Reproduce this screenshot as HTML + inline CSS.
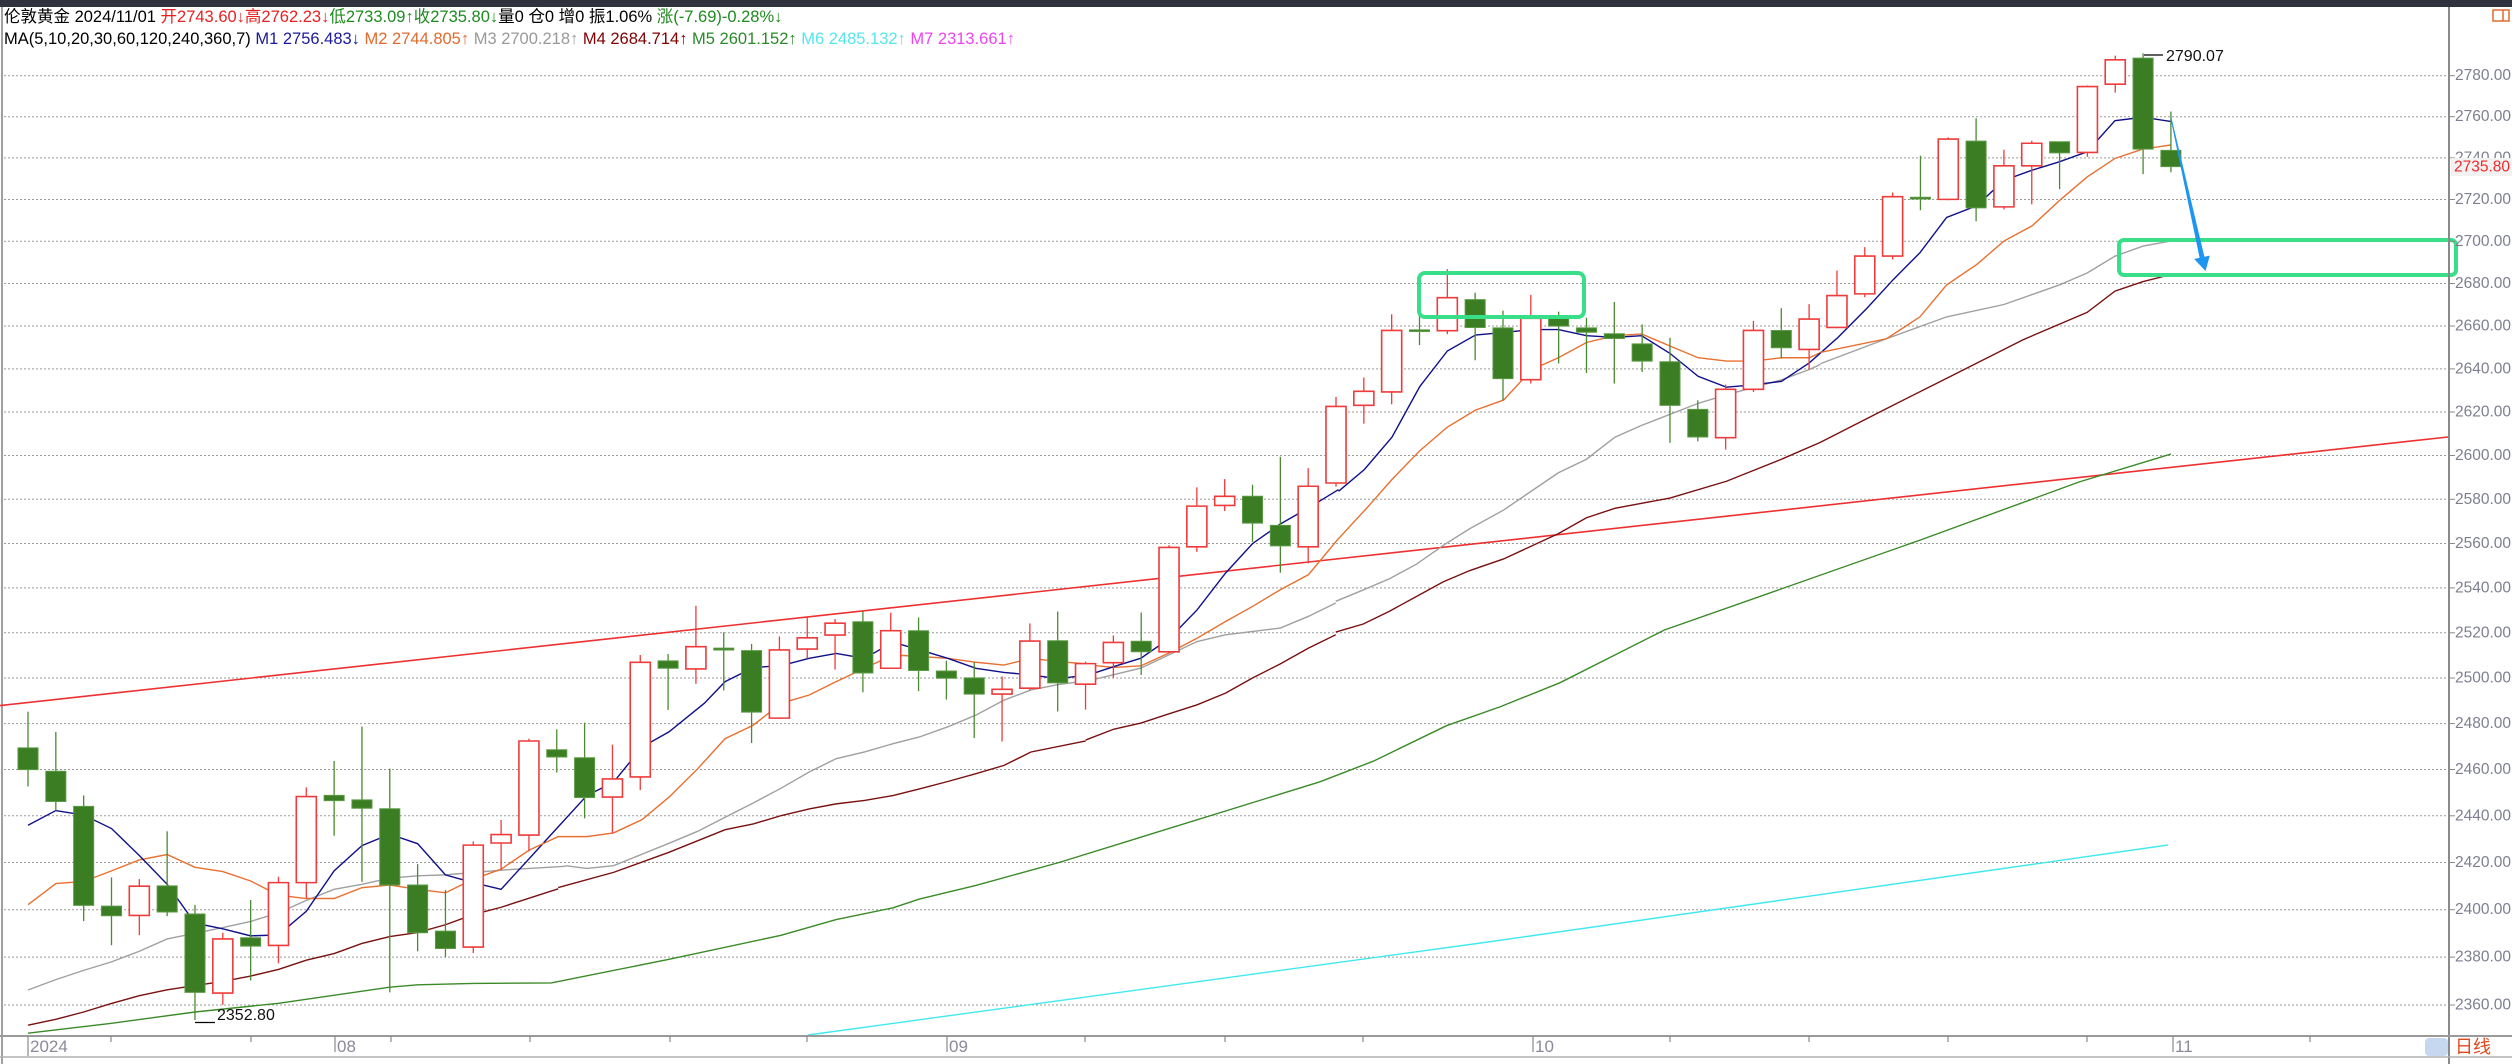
<!DOCTYPE html>
<html><head><meta charset="utf-8"><style>
html,body{margin:0;padding:0;background:#fff;overflow:hidden}
svg{display:block}
.c *{vector-effect:non-scaling-stroke}
.g line{stroke:#4a8a30;stroke-width:1.3}
.g rect{fill:#3a7d22;stroke:#5c9a45;stroke-width:1}
.r line{stroke:#ee3b3b;stroke-width:1.3}
.r rect{fill:#fff;stroke:#ee3b3b;stroke-width:1.6}
.ma{fill:none;stroke-width:1.4}
.m1{stroke:#10108a}.m2{stroke:#e87030}.m3{stroke:#a0a0a0}.m4{stroke:#7a1010}
.t{font-family:"Liberation Sans","Noto Sans CJK SC",sans-serif}
.yl{font-family:"Liberation Sans",sans-serif;font-size:15.5px;fill:#7d7f90}
</style></head><body>
<svg width="2512" height="1064" viewBox="0 0 2512 1064" xmlns="http://www.w3.org/2000/svg">
<rect x="0" y="0" width="2512" height="1064" fill="#fff"/>
<rect x="0" y="0" width="2512" height="7" fill="#30333d"/>
<line x1="2" y1="7" x2="2" y2="1064" stroke="#a0a0a0" stroke-width="2"/>

<g stroke="#9a9a9a" stroke-width="1" stroke-dasharray="2 2">
<line x1="4" y1="75.7" x2="2448" y2="75.7"/><line x1="4" y1="116.7" x2="2448" y2="116.7"/><line x1="4" y1="157.9" x2="2448" y2="157.9"/><line x1="4" y1="199.5" x2="2448" y2="199.5"/><line x1="4" y1="241.3" x2="2448" y2="241.3"/><line x1="4" y1="283.5" x2="2448" y2="283.5"/><line x1="4" y1="326" x2="2448" y2="326"/><line x1="4" y1="368.9" x2="2448" y2="368.9"/><line x1="4" y1="412" x2="2448" y2="412"/><line x1="4" y1="455.5" x2="2448" y2="455.5"/><line x1="4" y1="499.3" x2="2448" y2="499.3"/><line x1="4" y1="543.5" x2="2448" y2="543.5"/><line x1="4" y1="587.9" x2="2448" y2="587.9"/><line x1="4" y1="632.8" x2="2448" y2="632.8"/><line x1="4" y1="678" x2="2448" y2="678"/><line x1="4" y1="723.6" x2="2448" y2="723.6"/><line x1="4" y1="769.5" x2="2448" y2="769.5"/><line x1="4" y1="815.8" x2="2448" y2="815.8"/><line x1="4" y1="862.5" x2="2448" y2="862.5"/><line x1="4" y1="909.7" x2="2448" y2="909.7"/><line x1="4" y1="957.1" x2="2448" y2="957.1"/><line x1="4" y1="1005" x2="2448" y2="1005"/>
</g>

<line x1="0" y1="705.6" x2="2448" y2="437" stroke="#ee3030" stroke-width="1.6"/>

<g class="c">
<polyline class="ma" stroke="#40e8f0" points="808,1035 1488,942 2168,845"/>
<polyline class="ma" stroke="#3a8a28" points="28,1033.2 111.5,1023.3 195,1012 278.5,1003.3 389.8,987.2 417.6,984.8 473.3,983.4 551.2,982.9 669,959.3 781,935.3 836.2,919.6 893,907.8 919.4,899.1 975.9,885.4 1059,862.5 1319.9,781.8 1373.3,761.2 1446.5,725.7 1499.9,706.9 1559.8,682.8 1664.4,630 1920.4,540 2079,482 2171,454"/>
<polyline class="ma m4" points="1781.6,459.2 1820.3,442.4 1892.6,405.5 1948.3,377.5 2023.1,339.7 2087.1,312.4 2115,291.1 2143.1,281.6 2163.1,276.5"/>
</g>

<!-- Lines region A -->
<g class="c" transform="matrix(27.83 0 0 -2.3642 28 6583.7)">
<polyline class="ma m4" points="0,2351.1 1,2353.6 2,2356.7 3,2360.3 4,2363.6 5,2366.1 6,2367.9 7,2369.6 8,2371.9 9,2374.7 10,2378.6 11,2381.4 12,2385.7 13,2388.6 14,2390.3 15,2393.6 16,2397.9 17,2401 19.05,2408.8"/>
<polyline class="ma m3" points="0,2366 1,2370.4 2,2374.3 3,2377.9 4,2382.4 5,2387.6 6,2390 7,2392.4 8,2395 9,2398.6 10,2403.9 11,2408.6 12,2410.7 13,2413.3 14,2414.3 15,2414.7 16,2415.7 17,2416.7 19.31,2418.3"/>
<polyline class="ma m2" points="0,2402.1 1,2411 2,2411.9 3,2416.4 4,2421 5,2423.3 6,2417.9 7,2416.1 8,2412.1 9,2406.1 10,2404.7 11,2404.7 12,2409.3 13,2410.4 14,2408.6 15,2407.1 16,2412.9 17,2417.1 17.96,2424.8"/>
<polyline class="ma m1" points="0,2435.7 1,2441.9 2,2440 3,2434.3 4,2422.9 5,2410.7 6,2394.3 7,2391.9 8,2388.9 9,2389.3 10,2399.3 11,2416.4 12,2427.1 13,2431.9 14,2427.9 15,2414.7 16,2411.4 17,2408.6 18.54,2428.4"/>
</g>
<!-- Lines region B -->
<g class="c" transform="matrix(27.83 0 0 -2.3065 28 6443.5)">
<polyline class="ma m4" points="19.05,2408.8 21.04,2415.4 23.03,2424.1 25.05,2433.9 26.06,2436.4 27.06,2440 28.07,2442.9 29.04,2445.1 30.06,2446.6 31.08,2448.7 32.03,2451.6 33.05,2454.8 34.06,2458.2 35.07,2461.8 36.04,2467.6 38.01,2472.4"/>
<polyline class="ma m3" points="19.31,2418.3 20.08,2417.1 21.04,2418.3 22.07,2423.3 23.03,2428 24.06,2433.2 25.05,2439.3 26.06,2445.5 27.06,2451.9 28.07,2458.9 29.04,2464.7 30.06,2467.6 31.08,2471.2 32.03,2474.1 33.05,2478.5 34.06,2483.6 35.07,2490.1 36.04,2494.5 37.05,2496.9 38.01,2498.4"/>
<polyline class="ma m2" points="17.96,2424.8 19.05,2430.9 20.08,2430.9 21.04,2432.5 22.07,2438.3 23.03,2448 24.06,2460.3 25.05,2473.4 26.06,2479.2 27.06,2488.7 28.07,2492.3 29.04,2498.1 30.06,2503.9 31.08,2509.7 32.03,2509 33.05,2508.2 34.06,2506.5 35.07,2505.3 36.04,2508.2 37.02,2506.8 38.01,2505.8"/>
<polyline class="ma m1" points="18.54,2428.4 20.08,2448.7 21.04,2454.5 22.07,2469.8 23.03,2476.3 24.3,2488.7 25.05,2498.1 26.06,2504.2 27.06,2505 28.07,2508.2 29.04,2510.3 30.06,2508.2 31.08,2515.2 32.03,2511.9 33.05,2508.2 34.06,2503.9 35.07,2502.1 36.04,2501 37.02,2499.4 38.01,2500.9"/>
</g>
<!-- Lines region C -->
<g class="c" transform="matrix(27.83 0 0 -2.2516 28 6306.8)">
<polyline class="ma m4" points="38.01,2472.4 39.02,2477.2 39.99,2479.9 41,2484 42.01,2488 43.03,2493.2 44,2499.9 45,2506.2 46.01,2513.2 46.99,2519.1"/>
<polyline class="ma m3" points="38.01,2498.4 39.99,2504.3 42.01,2516.1 43.03,2519.1 45,2522.1 46.01,2527.3 46.99,2533.2"/>
<polyline class="ma m2" points="38.01,2505.8 39.02,2504.6 39.99,2505.3 41,2511 42.01,2517.6 43.03,2525 44,2531.7 45,2539.1 46.01,2545.8 47.09,2561.9"/>
<polyline class="ma m1" points="38.01,2500.9 39.02,2505 39.99,2508.7 41,2517.3 42.01,2530.2 43.03,2546.5 44,2559.6 45,2568.3 46.1,2576.1 47.09,2583.6"/>
</g>
<!-- Lines region D -->
<g class="c" transform="matrix(27.83 0 0 -2.1823 28 6129.5)">
<polyline class="ma m4" points="46.99,2519.1 47.98,2522.8 48.93,2528.7 49.89,2535.4 50.85,2542.1 51.81,2547.3 53.02,2552.6 54.99,2564.2 56,2571.5 57.02,2575.8 57.98,2578.1 59,2580.5 61.03,2588.2 63.01,2598.3"/>
<polyline class="ma m3" points="46.99,2533.2 47.98,2538.4 48.93,2543.6 49.89,2550.2 50.93,2559.5 51.81,2566.5 53.02,2575 54.99,2592.1 56,2598.3 57.02,2608.4 57.98,2613.8 60.01,2623.9 61.03,2627.8 63.01,2634.7 64.01,2639.4 64.4,2641.7"/>
<polyline class="ma m2" points="47.09,2561.9 48.21,2577.4 49.01,2589 50.01,2602.2 51,2613 52.01,2620.8 53.02,2625.4 54.04,2639.4 54.99,2644.8 56,2651.8 57.02,2654.9 57.98,2655.7 59,2650.2 60.01,2644.8 61.03,2643.3 62,2643.3 63.01,2644.8 64.01,2644.8 64.4,2647.1"/>
<polyline class="ma m1" points="47.09,2583.6 48.02,2593.6 49.01,2608.4 50.01,2631.6 51,2647.9 52.01,2655.2 53.02,2656.4 54.04,2657.7 54.99,2657.7 56,2654.9 57.02,2654.1 57.98,2654.9 59,2646.8 60.01,2636.3 61.03,2631.3 62,2632.4 63.01,2634 64.01,2642.5 64.99,2653.6"/>
</g>
<!-- Lines region E -->
<g class="c" transform="matrix(27.83 0 0 -2.1015 28 5915.3)">
<polyline class="ma m3" points="64.4,2641.7 66.78,2653.6 68.94,2664 71,2669.9 72.99,2679.2 73.99,2684.9 74.99,2692.9 76,2697.7 76.99,2700.1"/>
<polyline class="ma m2" points="64.4,2647.1 66.78,2653.6 67.98,2664 68.94,2679.2 70.02,2688.9 71,2700.1 72.01,2707.3 72.99,2719.3 73.99,2730.6 74.99,2739.4 76,2743.9 76.99,2745.8"/>
<polyline class="ma m1" points="64.99,2653.6 66.07,2668 67.02,2681.7 67.98,2694.5 68.94,2711.3 70.02,2716.9 71,2729 72.01,2733.8 72.99,2737.8 73.99,2742.6 74.99,2757.4 76,2759 76.99,2757"/>
</g>

<!-- Candles region A (0-17) -->
<g class="c" transform="matrix(27.83 0 0 -2.3446 28 6536.4)">
<g class="g">
<line x1="0" y1="2452.4" x2="0" y2="2484.3"/><rect x="-.36" y="2459.6" width=".72" height="9.3"/>
<line x1="1" y1="2442.1" x2="1" y2="2475.7"/><rect x=".64" y="2446" width=".72" height="12.9"/>
<line x1="2" y1="2395" x2="2" y2="2448.6"/><rect x="1.64" y="2401.7" width=".72" height="42.2"/>
<line x1="3" y1="2384.7" x2="3" y2="2413.6"/><rect x="2.64" y="2397.3" width=".72" height="4.1"/>
<line x1="5" y1="2397.1" x2="5" y2="2433.3"/><rect x="4.64" y="2398.9" width=".72" height="11.1"/>
<line x1="6" y1="2352.8" x2="6" y2="2401.9"/><rect x="5.64" y="2364.6" width=".72" height="33.4"/>
<line x1="8" y1="2369.7" x2="8" y2="2404"/><rect x="7.64" y="2384.3" width=".72" height="3.6"/>
<line x1="11" y1="2431.4" x2="11" y2="2463.3"/><rect x="10.64" y="2446.4" width=".72" height="2.2"/>
<line x1="12" y1="2411.7" x2="12" y2="2478"/><rect x="11.64" y="2443.1" width=".72" height="3.6"/>
<line x1="13" y1="2364.6" x2="13" y2="2460"/><rect x="12.64" y="2410.4" width=".72" height="32.5"/>
<line x1="14" y1="2382.1" x2="14" y2="2419.3"/><rect x="13.64" y="2390" width=".72" height="20.4"/>
<line x1="15" y1="2379.6" x2="15" y2="2408.3"/><rect x="14.64" y="2383.3" width=".72" height="7.4"/>
</g>
<g class="r">
<line x1="4" y1="2389" x2="4" y2="2412.9"/><rect x="3.64" y="2397.4" width=".72" height="12.5"/>
<line x1="7" y1="2359.3" x2="7" y2="2390"/><rect x="6.64" y="2364.3" width=".72" height="23.1"/>
<line x1="9" y1="2377" x2="9" y2="2413.9"/><rect x="8.64" y="2384.6" width=".72" height="26.8"/>
<line x1="10" y1="2404.7" x2="10" y2="2452"/><rect x="9.64" y="2411.4" width=".72" height="36.7"/>
<line x1="16" y1="2381.4" x2="16" y2="2429"/><rect x="15.64" y="2383.9" width=".72" height="43.5"/>
<line x1="17" y1="2417.1" x2="17" y2="2438.1"/><rect x="16.64" y="2428.3" width=".72" height="3.6"/>
</g>
</g>
<!-- Candles region B (18-37) -->
<g class="c" transform="matrix(27.83 0 0 -2.2879 28 6397.6)">
<g class="g">
<line x1="19" y1="2458.6" x2="19" y2="2477.5"/><rect x="18.64" y="2465.4" width=".72" height="3.2"/>
<line x1="20" y1="2438.6" x2="20" y2="2480.4"/><rect x="19.64" y="2447.7" width=".72" height="17.4"/>
<line x1="23" y1="2486" x2="23" y2="2510.4"/><rect x="22.64" y="2504.2" width=".72" height="3.2"/>
<line x1="25" y1="2494.5" x2="25" y2="2519.9"/><rect x="24.64" y="2512.2" width=".72" height="0.8"/>
<line x1="26" y1="2471.5" x2="26" y2="2514.8"/><rect x="25.64" y="2485" width=".72" height="26.9"/>
<line x1="30" y1="2493.7" x2="30" y2="2529"/><rect x="29.64" y="2502.1" width=".72" height="22.4"/>
<line x1="32" y1="2494.2" x2="32" y2="2526.4"/><rect x="31.64" y="2503.2" width=".72" height="17.4"/>
<line x1="33" y1="2490.5" x2="33" y2="2507.5"/><rect x="32.64" y="2499.8" width=".72" height="3.2"/>
<line x1="34" y1="2473.7" x2="34" y2="2506.8"/><rect x="33.64" y="2492.9" width=".72" height="7.1"/>
<line x1="37" y1="2485.3" x2="37" y2="2529"/><rect x="36.64" y="2497.8" width=".72" height="18.4"/>
</g>
<g class="r">
<line x1="18" y1="2424.1" x2="18" y2="2473.4"/><rect x="17.64" y="2431.3" width=".72" height="41.1"/>
<line x1="21" y1="2432" x2="21" y2="2470.8"/><rect x="20.64" y="2447.9" width=".72" height="7.9"/>
<line x1="22" y1="2450.9" x2="22" y2="2510"/><rect x="21.64" y="2456.7" width=".72" height="50.1"/>
<line x1="24" y1="2497.4" x2="24" y2="2531.5"/><rect x="23.64" y="2503.9" width=".72" height="9.7"/>
<line x1="27" y1="2482.1" x2="27" y2="2518.1"/><rect x="26.64" y="2482.4" width=".72" height="29.8"/>
<line x1="28" y1="2508.5" x2="28" y2="2526.4"/><rect x="27.64" y="2512.6" width=".72" height="4.9"/>
<line x1="29" y1="2503.6" x2="29" y2="2525.7"/><rect x="28.64" y="2518.7" width=".72" height="5.2"/>
<line x1="31" y1="2503.9" x2="31" y2="2528.5"/><rect x="30.64" y="2504.2" width=".72" height="16.4"/>
<line x1="35" y1="2472.2" x2="35" y2="2500.6"/><rect x="34.64" y="2492.9" width=".72" height="2.1"/>
<line x1="36" y1="2494.5" x2="36" y2="2523.8"/><rect x="35.64" y="2495.5" width=".72" height="20.6"/>
</g>
</g>
<!-- Candles region C (38-46) -->
<g class="c" transform="matrix(27.83 0 0 -2.2339 28 6262.0)">
<g class="g">
<line x1="40" y1="2501" x2="40" y2="2529"/><rect x="39.64" y="2511.4" width=".72" height="4.7"/>
<line x1="44" y1="2560.6" x2="44" y2="2586.2"/><rect x="43.64" y="2569" width=".72" height="12"/>
<line x1="45" y1="2546.8" x2="45" y2="2598.7"/><rect x="44.64" y="2558.8" width=".72" height="9.2"/>
</g>
<g class="r">
<line x1="38" y1="2485.5" x2="38" y2="2507"/><rect x="37.64" y="2496.9" width=".72" height="9.2"/>
<line x1="39" y1="2499.9" x2="39" y2="2518.7"/><rect x="38.64" y="2506.5" width=".72" height="9.1"/>
<line x1="41" y1="2511" x2="41" y2="2559.1"/><rect x="40.64" y="2511.4" width=".72" height="46.7"/>
<line x1="42" y1="2556.1" x2="42" y2="2585"/><rect x="41.64" y="2558.4" width=".72" height="18.2"/>
<line x1="43" y1="2574.4" x2="43" y2="2588.7"/><rect x="42.64" y="2576.9" width=".72" height="4.1"/>
<line x1="46" y1="2551" x2="46" y2="2593.6"/><rect x="45.64" y="2558.4" width=".72" height="27.1"/>
</g>
</g>
<!-- Candles region D (47-64) -->
<g class="c" transform="matrix(27.83 0 0 -2.1574 28 6064.4)">
<g class="g">
<line x1="50" y1="2651" x2="50" y2="2671.2"/><rect x="49.64" y="2657.3" width=".72" height="0.8"/>
<line x1="52" y1="2644" x2="52" y2="2675.3"/><rect x="51.64" y="2659.2" width=".72" height="12.9"/>
<line x1="53" y1="2625.4" x2="53" y2="2667"/><rect x="52.64" y="2635.5" width=".72" height="23.5"/>
<line x1="55" y1="2642.5" x2="55" y2="2666.5"/><rect x="54.64" y="2659.8" width=".72" height="4.4"/>
<line x1="56" y1="2638.1" x2="56" y2="2663.7"/><rect x="55.64" y="2657" width=".72" height="2"/>
<line x1="57" y1="2633.2" x2="57" y2="2671"/><rect x="56.64" y="2654.1" width=".72" height="2.2"/>
<line x1="58" y1="2638.6" x2="58" y2="2660.6"/><rect x="57.64" y="2643.6" width=".72" height="8"/>
<line x1="59" y1="2605.7" x2="59" y2="2654.4"/><rect x="58.64" y="2623.1" width=".72" height="20.2"/>
<line x1="60" y1="2606.4" x2="60" y2="2625.4"/><rect x="59.64" y="2608.4" width=".72" height="12.8"/>
<line x1="63" y1="2644.8" x2="63" y2="2668.1"/><rect x="62.64" y="2649.8" width=".72" height="8"/>
</g>
<g class="r">
<line x1="47" y1="2585.4" x2="47" y2="2627"/><rect x="46.64" y="2587.1" width=".72" height="35.5"/>
<line x1="48" y1="2614.6" x2="48" y2="2636"/><rect x="47.64" y="2623.1" width=".72" height="6.5"/>
<line x1="49" y1="2623.6" x2="49" y2="2665.3"/><rect x="48.64" y="2629.3" width=".72" height="28.5"/>
<line x1="51" y1="2656.1" x2="51" y2="2686.2"/><rect x="50.64" y="2657.7" width=".72" height="15.3"/>
<line x1="54" y1="2633.2" x2="54" y2="2674.3"/><rect x="53.64" y="2635" width=".72" height="28.4"/>
<line x1="61" y1="2602.6" x2="61" y2="2632.7"/><rect x="60.64" y="2608.1" width=".72" height="22.4"/>
<line x1="62" y1="2629.3" x2="62" y2="2662.2"/><rect x="61.64" y="2630.5" width=".72" height="27.3"/>
<line x1="64" y1="2639.7" x2="64" y2="2670"/><rect x="63.64" y="2649" width=".72" height="14.1"/>
</g>
</g>
<!-- Candles region E (65-77) -->
<g class="c" transform="matrix(27.83 0 0 -2.0860 28 5873.5)">
<g class="g">
<line x1="68" y1="2714.9" x2="68" y2="2741"/><rect x="67.64" y="2720.3" width=".72" height="0.8"/>
<line x1="70" y1="2709.6" x2="70" y2="2759"/><rect x="69.64" y="2716" width=".72" height="32"/>
<line x1="73" y1="2725" x2="73" y2="2747.7"/><rect x="72.64" y="2742.4" width=".72" height="5.3"/>
<line x1="76" y1="2732.2" x2="76" y2="2790.07"/><rect x="75.64" y="2744.2" width=".72" height="43.6"/>
<line x1="77" y1="2733.09" x2="77" y2="2762.23"/><rect x="76.64" y="2735.8" width=".72" height="7.8"/>
</g>
<g class="r">
<line x1="65" y1="2658.7" x2="65" y2="2686"/><rect x="64.64" y="2658.7" width=".72" height="15.3"/>
<line x1="66" y1="2673.2" x2="66" y2="2697.2"/><rect x="65.64" y="2674.8" width=".72" height="18.1"/>
<line x1="67" y1="2691.3" x2="67" y2="2723.4"/><rect x="66.64" y="2692.9" width=".72" height="28.5"/>
<line x1="69" y1="2719.7" x2="69" y2="2749.8"/><rect x="68.64" y="2720.1" width=".72" height="28.9"/>
<line x1="71" y1="2715.3" x2="71" y2="2743.9"/><rect x="70.64" y="2716.5" width=".72" height="19.7"/>
<line x1="72" y1="2717.7" x2="72" y2="2748.2"/><rect x="71.64" y="2736.2" width=".72" height="10.8"/>
<line x1="74" y1="2740.5" x2="74" y2="2774.7"/><rect x="73.64" y="2742.6" width=".72" height="31.6"/>
<line x1="75" y1="2771.3" x2="75" y2="2789"/><rect x="74.64" y="2775.3" width=".72" height="11.7"/>
</g>
</g>

<!-- annotations -->
<rect x="1419" y="273" width="165" height="44" rx="6" fill="none" stroke="#38de88" stroke-width="4"/>
<rect x="2119" y="240" width="337" height="35" rx="5" fill="none" stroke="#38de88" stroke-width="4"/>
<polygon points="2170.5,118.1 2171.5,117.9 2204.4,256.8 2209.8,255.6 2205.5,271 2194.2,259 2199.6,257.8" fill="#1e96f0"/>

<line x1="2144" y1="55" x2="2163" y2="55" stroke="#000" stroke-width="1.2"/>
<text x="2166" y="61" class="t" font-size="16" fill="#111">2790.07</text>
<line x1="195" y1="1022.5" x2="215" y2="1022.5" stroke="#000" stroke-width="1.2"/>
<text x="217" y="1020" class="t" font-size="16" fill="#111">2352.80</text>

<!-- right axis -->
<line x1="2449" y1="7" x2="2449" y2="1064" stroke="#8a8a8a" stroke-width="2"/>
<g stroke="#8a8a8a" stroke-width="1">
<line x1="2449" y1="75.7" x2="2455" y2="75.7"/><line x1="2449" y1="116.7" x2="2455" y2="116.7"/><line x1="2449" y1="157.9" x2="2455" y2="157.9"/><line x1="2449" y1="199.5" x2="2455" y2="199.5"/><line x1="2449" y1="241.3" x2="2455" y2="241.3"/><line x1="2449" y1="283.5" x2="2455" y2="283.5"/><line x1="2449" y1="326" x2="2455" y2="326"/><line x1="2449" y1="368.9" x2="2455" y2="368.9"/><line x1="2449" y1="412" x2="2455" y2="412"/><line x1="2449" y1="455.5" x2="2455" y2="455.5"/><line x1="2449" y1="499.3" x2="2455" y2="499.3"/><line x1="2449" y1="543.5" x2="2455" y2="543.5"/><line x1="2449" y1="587.9" x2="2455" y2="587.9"/><line x1="2449" y1="632.8" x2="2455" y2="632.8"/><line x1="2449" y1="678" x2="2455" y2="678"/><line x1="2449" y1="723.6" x2="2455" y2="723.6"/><line x1="2449" y1="769.5" x2="2455" y2="769.5"/><line x1="2449" y1="815.8" x2="2455" y2="815.8"/><line x1="2449" y1="862.5" x2="2455" y2="862.5"/><line x1="2449" y1="909.7" x2="2455" y2="909.7"/><line x1="2449" y1="957.1" x2="2455" y2="957.1"/><line x1="2449" y1="1005" x2="2455" y2="1005"/>
</g>
<g class="yl" dominant-baseline="central">
<text x="2455" y="75.7">2780.00</text><text x="2455" y="116.7">2760.00</text><text x="2455" y="157.9">2740.00</text><text x="2455" y="199.5">2720.00</text><text x="2455" y="241.3">2700.00</text><text x="2455" y="283.5">2680.00</text><text x="2455" y="326">2660.00</text><text x="2455" y="368.9">2640.00</text><text x="2455" y="412">2620.00</text><text x="2455" y="455.5">2600.00</text><text x="2455" y="499.3">2580.00</text><text x="2455" y="543.5">2560.00</text><text x="2455" y="587.9">2540.00</text><text x="2455" y="632.8">2520.00</text><text x="2455" y="678">2500.00</text><text x="2455" y="723.6">2480.00</text><text x="2455" y="769.5">2460.00</text><text x="2455" y="815.8">2440.00</text><text x="2455" y="862.5">2420.00</text><text x="2455" y="909.7">2400.00</text><text x="2455" y="957.1">2380.00</text><text x="2455" y="1005">2360.00</text>
</g>
<rect x="2451" y="158" width="61" height="18" fill="#f2f2f2"/>
<text x="2454" y="167" class="yl" dominant-baseline="central" style="fill:#ee2a2a">2735.80</text>
<rect x="2493" y="10" width="16" height="11" fill="none" stroke="#e06a30" stroke-width="1.5"/>
<line x1="2503" y1="10" x2="2503" y2="21" stroke="#e06a30" stroke-width="1.5"/>

<!-- bottom axis -->
<line x1="0" y1="1036" x2="2512" y2="1036" stroke="#9a9a9a" stroke-width="2"/>
<line x1="0" y1="1057" x2="2512" y2="1057" stroke="#b0b0b0" stroke-width="1.5"/>
<g stroke="#8a8a8a" stroke-width="1.2">
<line x1="28" y1="1036" x2="28" y2="1056"/><line x1="111" y1="1036" x2="111" y2="1042"/><line x1="251" y1="1036" x2="251" y2="1042"/><line x1="335" y1="1036" x2="335" y2="1052"/><line x1="391" y1="1036" x2="391" y2="1042"/><line x1="530" y1="1036" x2="530" y2="1042"/><line x1="670" y1="1036" x2="670" y2="1042"/><line x1="807" y1="1036" x2="807" y2="1042"/><line x1="947" y1="1036" x2="947" y2="1052"/><line x1="1085" y1="1036" x2="1085" y2="1042"/><line x1="1225" y1="1036" x2="1225" y2="1042"/><line x1="1363" y1="1036" x2="1363" y2="1042"/><line x1="1533" y1="1036" x2="1533" y2="1052"/><line x1="1670" y1="1036" x2="1670" y2="1042"/><line x1="1809" y1="1036" x2="1809" y2="1042"/><line x1="1948" y1="1036" x2="1948" y2="1042"/><line x1="2087" y1="1036" x2="2087" y2="1042"/><line x1="2173" y1="1036" x2="2173" y2="1052"/><line x1="2310" y1="1036" x2="2310" y2="1042"/>
</g>
<g class="t" font-size="17" fill="#8a8a9a">
<text x="30" y="1052">2024</text><text x="337" y="1052">08</text><text x="949" y="1052">09</text><text x="1535" y="1052">10</text><text x="2175" y="1052">11</text>
</g>
<rect x="2425" y="1038" width="23" height="18" rx="4" fill="#c6d8f0"/>
<text x="2455" y="1053" class="t" font-size="18" fill="#e0481e">日线</text>

<!-- header -->
<text x="4" y="22" class="t" font-size="16.5" fill="#000">伦敦黄金 2024/11/01 <tspan fill="#e82020">开2743.60↓高2762.23↓</tspan><tspan fill="#1f8a1f">低2733.09↑收2735.80↓</tspan>量0 仓0 增0 振1.06% <tspan fill="#1f8a1f">涨(-7.69)-0.28%↓</tspan></text>
<text x="4" y="44" class="t" font-size="16.5" fill="#000">MA(5,10,20,30,60,120,240,360,7)  <tspan fill="#1a1a9a">M1 2756.483↓</tspan> <tspan fill="#e06a30">M2 2744.805↑</tspan> <tspan fill="#999">M3 2700.218↑</tspan> <tspan fill="#800000">M4 2684.714↑</tspan> <tspan fill="#2a8a2a">M5 2601.152↑</tspan> <tspan fill="#55e5ee">M6 2485.132↑</tspan> <tspan fill="#ee44ee">M7 2313.661↑</tspan></text>
</svg>
</body></html>
